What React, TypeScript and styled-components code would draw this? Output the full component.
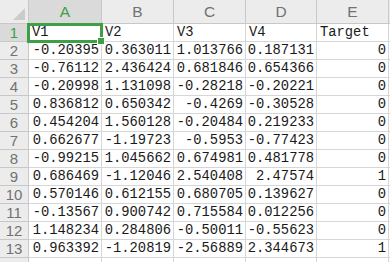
import * as React from "react";
import styled, { createGlobalStyle } from "styled-components";

const green = "#3e9f46";
const headerGrey = "#ececec";
const selectedHeader = "#dadada";
const gridLine = "#d6d6d6";
const headerLine = "#c8c8c8";
const headerText = "#727272";

const GlobalStyle = createGlobalStyle`
  html, body {
    margin: 0;
    padding: 0;
    background: #fff;
    overflow: hidden;
  }
`;

const Sheet = styled.div`
  display: grid;
  grid-template-columns: 29px 73px 72px 72px 71px 72px 1fr;
  grid-template-rows: 24px repeat(14, 18px);
  width: 390px;
  height: 262px;
  overflow: hidden;
  background: #fff;
`;

const Corner = styled.div`
  position: relative;
  background: ${headerGrey};
  border-right: 1px solid ${headerLine};
  border-bottom: 1px solid ${headerLine};
`;

const CornerTriangle = styled.div`
  position: absolute;
  right: 3px;
  bottom: 3px;
  width: 0;
  height: 0;
  border-left: 12px solid transparent;
  border-bottom: 12px solid #cbcbcb;
`;

const ColHeader = styled.div<{ selected?: boolean }>`
  display: flex;
  align-items: center;
  justify-content: center;
  background: ${(p) => (p.selected ? selectedHeader : headerGrey)};
  border-right: 1px solid ${headerLine};
  border-bottom: 1px solid ${headerLine};
  color: ${(p) => (p.selected ? green : headerText)};
  font-family: "Liberation Sans", Arial, sans-serif;
  font-size: 15.5px;
  padding-top: 1px;
`;

const RowHeader = styled.div<{ selected?: boolean }>`
  display: flex;
  align-items: center;
  justify-content: center;
  background: ${(p) => (p.selected ? selectedHeader : headerGrey)};
  border-right: 1px solid ${headerLine};
  border-bottom: 1px solid ${headerLine};
  color: ${(p) => (p.selected ? green : headerText)};
  font-family: "Liberation Sans", Arial, sans-serif;
  font-size: 15px;
`;

const Cell = styled.div<{ numeric?: boolean }>`
  position: relative;
  display: flex;
  align-items: flex-end;
  justify-content: ${(p) => (p.numeric ? "flex-end" : "flex-start")};
  padding: 0 2px 0 3px;
  border-right: 1px solid ${gridLine};
  border-bottom: 1px solid ${gridLine};
  font-family: "Liberation Mono", "Courier New", monospace;
  font-size: 13.8px;
  line-height: 16px;
  color: #1a1a1a;
  white-space: nowrap;
  overflow: visible;
`;

const Selection = styled.div`
  position: absolute;
  left: -2px;
  top: -1px;
  right: -2px;
  bottom: -2px;
  border: 3px solid ${green};
  pointer-events: none;
  z-index: 1;
`;

const Handle = styled.div`
  position: absolute;
  right: -5px;
  bottom: -5px;
  width: 6px;
  height: 6px;
  background: ${green};
  border: 1px solid #fff;
`;

const columns = ["A", "B", "C", "D", "E"];

const rows: string[][] = [
  ["V1", "V2", "V3", "V4", "Target"],
  ["-0.20395", "0.363011", "1.013766", "0.187131", "0"],
  ["-0.76112", "2.436424", "0.681846", "0.654366", "0"],
  ["-0.20998", "1.131098", "-0.28218", "-0.20221", "0"],
  ["0.836812", "0.650342", "-0.4269", "-0.30528", "0"],
  ["0.454204", "1.560128", "-0.20484", "0.219233", "0"],
  ["0.662677", "-1.19723", "-0.5953", "-0.77423", "0"],
  ["-0.99215", "1.045662", "0.674981", "0.481778", "0"],
  ["0.686469", "-1.12046", "2.540408", "2.47574", "1"],
  ["0.570146", "0.612155", "0.680705", "0.139627", "0"],
  ["-0.13567", "0.900742", "0.715584", "0.012256", "0"],
  ["1.148234", "0.284806", "-0.50011", "-0.55623", "0"],
  ["0.963392", "-1.20819", "-2.56889", "2.344673", "1"],
  ["", "", "", "", ""],
];

export default function App() {
  return (
    <>
      <GlobalStyle />
      <Sheet>
        <Corner>
          <CornerTriangle />
        </Corner>
        {columns.map((c) => (
          <ColHeader key={c} selected={c === "A"}>
            {c}
          </ColHeader>
        ))}
        <ColHeader />
        {rows.map((row, r) => (
          <React.Fragment key={r}>
            {/* last row is only a sliver at the window edge, label not visible */}
            <RowHeader selected={r === 0}>
              {r < rows.length - 1 ? r + 1 : ""}
            </RowHeader>
            {row.map((value, c) => (
              <Cell key={c} numeric={r > 0}>
                {value}
                {r === 0 && c === 0 ? (
                  <Selection>
                    <Handle />
                  </Selection>
                ) : null}
              </Cell>
            ))}
            <Cell />
          </React.Fragment>
        ))}
      </Sheet>
    </>
  );
}
